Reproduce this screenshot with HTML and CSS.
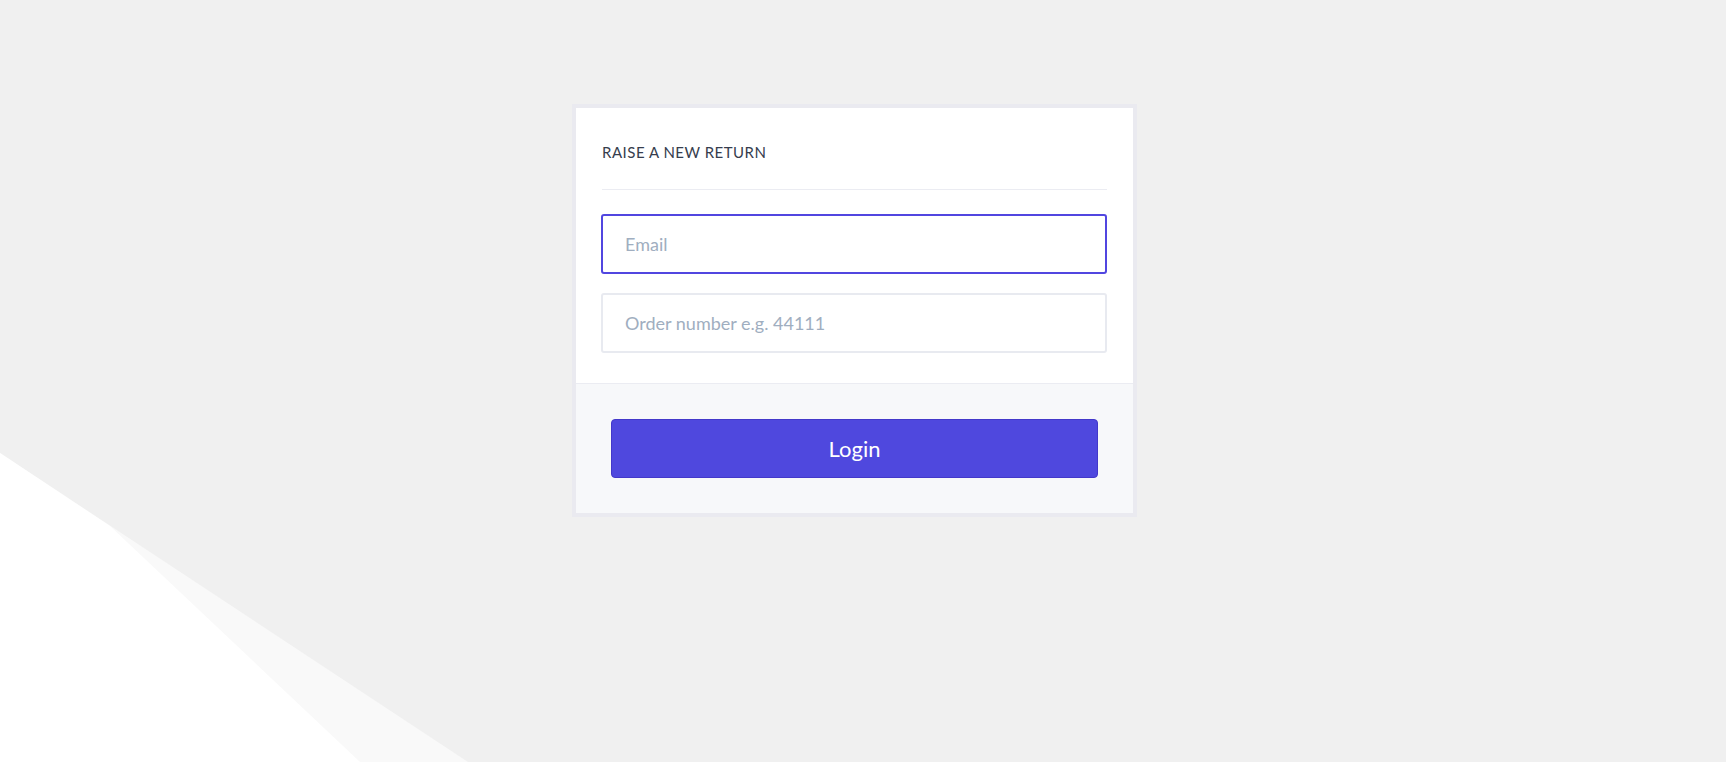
FILE: index.html
```html
<!DOCTYPE html>
<html lang="en">
<head>
<meta charset="UTF-8">
<meta name="viewport" content="width=device-width, initial-scale=1.0">
<title>Raise a new return</title>
<link rel="stylesheet" href="styles.css">
</head>
<body>
    <svg class="backdrop" width="480" height="310" viewBox="0 0 480 310" aria-hidden="true">
        <polygon points="0,1 468,310 0,310" fill="#f9f9f9"/>
        <polygon points="0,1 110,74 360,310 0,310" fill="#ffffff"/>
    </svg>

    <form class="card" id="return-form">
        <div class="card-body">
            <h1 class="card-title">Raise a new return</h1>
            <div class="form-group">
                <input type="email" id="return-email" class="field is-focus" placeholder="Email" autofocus>
            </div>
            <div class="form-group">
                <input type="text" id="return-order" class="field" placeholder="Order number e.g. 44111">
            </div>
        </div>
        <div class="card-footer">
            <button type="submit" class="btn-login">Login</button>
        </div>
    </form>
</body>
</html>
```

FILE: styles.css
```css
html, body {
  height: 100%;
}
body {
  font-family: Lato, "Open Sans", Arial, sans-serif;
  margin: 0;
  background-color: #f0f0f0;
  overflow: hidden;
  position: relative;
}
.backdrop {
  position: absolute;
  left: 0;
  bottom: 0;
  display: block;
}
.card {
  position: relative;
  width: 565px;
  box-sizing: border-box;
  margin: 104px 0 0 572px;
  border: 4px solid #eaeaf0;
  background-color: #fff;
}
.card-body {
  padding: 34px 26px 30px 25px;
}
.card-title {
  margin: 0 0 0 1px;
  padding-bottom: 27px;
  border-bottom: 1px solid #ebecf2;
  font-size: 15px;
  line-height: 20px;
  font-weight: 400;
  letter-spacing: 0.5px;
  text-transform: uppercase;
  color: #363d4d;
}
.form-group {
  margin-top: 24px;
}
.form-group + .form-group {
  margin-top: 19px;
}
.field {
  display: block;
  width: 100%;
  height: 60px;
  box-sizing: border-box;
  padding: 0 22px;
  border: 2px solid #e8eaf0;
  border-radius: 3px;
  font-family: inherit;
  font-size: 18px;
  color: #2d3748;
  background-color: #fff;
  outline: none;
}
.field::placeholder {
  color: #a0aec0;
}
.field.is-focus,
.field:focus {
  border-color: #5146e0;
}
.card-footer {
  padding: 35px;
  border-top: 1px solid #ebecf2;
  background-color: #f7f8fa;
}
.btn-login {
  display: block;
  width: 100%;
  height: 59px;
  border: 1px solid #4338ca;
  border-radius: 4px;
  background-color: #4f48de;
  color: #fff;
  font-family: inherit;
  font-size: 22px;
  cursor: pointer;
}
```
